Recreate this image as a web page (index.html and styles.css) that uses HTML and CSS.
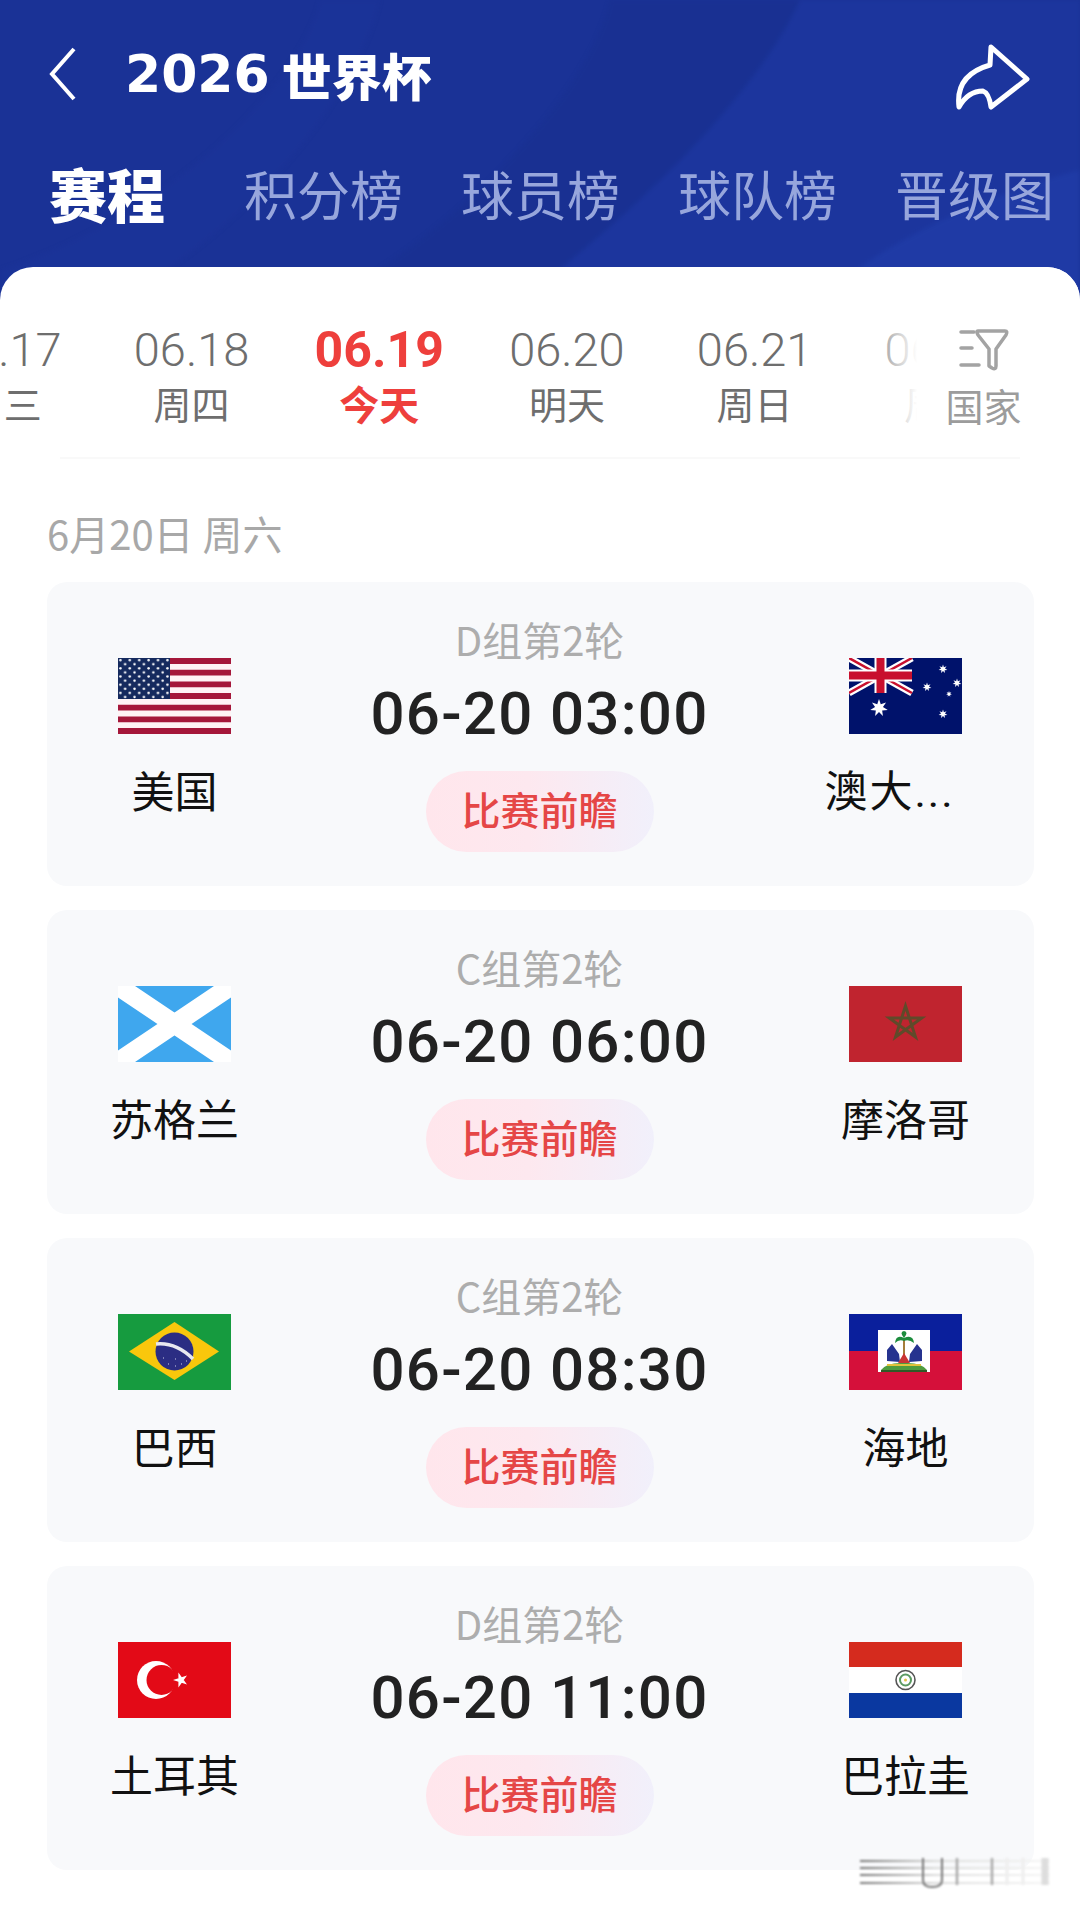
FILE: index.html
```html
<!DOCTYPE html>
<html lang="en">
<head>
    <meta charset="UTF-8">
    <meta name="viewport" content="width=device-width, initial-scale=1.0">
    <title>2026 世界杯</title>
    <link rel="stylesheet" href="styles.css">
</head>
<body>
    <!-- shared shapes for the flags -->
    <svg class="defs" width="0" height="0">
        <defs>
            <polygon id="star7" points="0,-1 .195,-.405 .782,-.623 .439,-.1 .975,.223 .352,.281 .434,.901 0,.45 -.434,.901 -.352,.281 -.975,.223 -.439,-.1 -.782,-.623 -.195,-.405" fill="#fff"/>
            <pattern id="usStars" width="9.4" height="8.2" patternUnits="userSpaceOnUse">
                <circle cx="2.4" cy="2.1" r="1.25" fill="#fff"/>
                <circle cx="7.1" cy="6.2" r="1.25" fill="#fff"/>
            </pattern>
        </defs>
    </svg>

    <header class="header">
        <svg class="header-bands" viewBox="0 0 1080 300" preserveAspectRatio="none">
            <path d="M800 0 C760 90 640 210 520 300 L1080 300 L1080 0 Z" fill="#1f3aa6" opacity=".45"/>
            <path d="M610 0 C590 90 470 220 330 300 L520 300 C640 210 760 90 800 0 Z" fill="#172d8c" opacity=".3"/>
            <path d="M1080 170 C1000 190 880 240 820 300 L1080 300 Z" fill="#2140ad" opacity=".5"/>
            <path d="M320 0 C300 80 180 210 0 270 L0 300 L120 300 C260 220 360 90 380 0 Z" fill="#1e389f" opacity=".2"/>
        </svg>
        <div class="topbar">
            <svg class="back" width="28" height="54" viewBox="0 0 28 54">
                <path d="M25 2 L3 27 L25 52" fill="none" stroke="#fff" stroke-width="4"/>
            </svg>
            <h1 class="title"><span class="title-num">2026</span><span class="title-name">世界杯</span></h1>
            <svg class="share" width="80" height="72" viewBox="955 39 80 72">
                <path d="M993 48 L1029 80 L993 108 Q991 94 985 92 Q970 92 961 108 Q957 76 992 66 Z" fill="none" stroke="#fff" stroke-width="5" stroke-linejoin="round"/>
            </svg>
        </div>
        <nav class="tabs">
            <span class="tab tab-active">赛程</span>
            <span class="tab">积分榜</span>
            <span class="tab">球员榜</span>
            <span class="tab">球队榜</span>
            <span class="tab">晋级图</span>
        </nav>
    </header>

    <main class="sheet">
        <div class="date-bar">
            <div class="dates">
                <div class="date-item"><span class="date-num">06.17</span><span class="date-day">周三</span></div>
                <div class="date-item"><span class="date-num">06.18</span><span class="date-day">周四</span></div>
                <div class="date-item date-today"><span class="date-num">06.19</span><span class="date-day">今天</span></div>
                <div class="date-item"><span class="date-num">06.20</span><span class="date-day">明天</span></div>
                <div class="date-item"><span class="date-num">06.21</span><span class="date-day">周日</span></div>
                <div class="date-item"><span class="date-num">06.22</span><span class="date-day">周一</span></div>
            </div>
            <div class="country-filter">
                <svg width="50" height="42" viewBox="0 0 50 42">
                    <path d="M2 3 H15 M2 19 H13 M2 36 H20" fill="none" stroke="#a3a3a3" stroke-width="3.5" stroke-linecap="round"/>
                    <path d="M19 2 H46 Q49 2 47 6 L37 20 V37 Q37 41 33 39 L30 37 V20 L19 6 Q17 2 19 2 Z" fill="none" stroke="#a3a3a3" stroke-width="3.5" stroke-linejoin="round"/>
                </svg>
                <span class="country-label">国家</span>
            </div>
        </div>

        <h2 class="day-title">6月20日 周六</h2>

        <section class="matches">
            <article class="match">
                <div class="team">
                    <svg class="flag" viewBox="0 0 113 76">
                        <rect width="113" height="76" fill="#fff3f5"/>
                        <path d="M0 3 H113 M0 14.7 H113 M0 26.4 H113 M0 38 H113 M0 49.7 H113 M0 61.4 H113 M0 73 H113" stroke="#a5173a" stroke-width="5.8"/>
                        <rect width="52" height="41" fill="#152a5e"/>
                        <rect width="52" height="41" fill="url(#usStars)"/>
                    </svg>
                    <span class="team-name">美国</span>
                </div>
                <div class="info">
                    <span class="group">D组第2轮</span>
                    <span class="time">06-20 03:00</span>
                    <span class="preview">比赛前瞻</span>
                </div>
                <div class="team">
                    <svg class="flag" viewBox="0 0 113 76">
                        <rect width="113" height="76" fill="#00126b"/>
                        <path d="M0 0 L63 35 M63 0 L0 35" stroke="#fff" stroke-width="7"/>
                        <path d="M0 0 L63 35 M63 0 L0 35" stroke="#c8102e" stroke-width="2.5"/>
                        <path d="M31.5 0 V35 M0 17.5 H63" stroke="#fff" stroke-width="12"/>
                        <path d="M31.5 0 V35 M0 17.5 H63" stroke="#c8102e" stroke-width="8"/>
                        <use href="#star7" transform="translate(30 50) scale(9)"/>
                        <use href="#star7" transform="translate(94 11) scale(4.5)"/>
                        <use href="#star7" transform="translate(78 29) scale(4.5)"/>
                        <use href="#star7" transform="translate(108 25) scale(4.5)"/>
                        <use href="#star7" transform="translate(100 36) scale(3)"/>
                        <use href="#star7" transform="translate(94 56) scale(4.5)"/>
                    </svg>
                    <span class="team-name team-name-cut">澳大...</span>
                </div>
            </article>

            <article class="match">
                <div class="team">
                    <svg class="flag" viewBox="0 0 113 76">
                        <rect width="113" height="76" fill="#3fa7ee"/>
                        <path d="M0 0 L113 76 M113 0 L0 76" stroke="#fff" stroke-width="19"/>
                    </svg>
                    <span class="team-name">苏格兰</span>
                </div>
                <div class="info">
                    <span class="group">C组第2轮</span>
                    <span class="time">06-20 06:00</span>
                    <span class="preview">比赛前瞻</span>
                </div>
                <div class="team">
                    <svg class="flag" viewBox="0 0 113 76">
                        <rect width="113" height="76" fill="#c0242f"/>
                        <polygon points="56.5,20 66.5,51 40.3,32 72.7,32 46.5,51" fill="none" stroke="#5f4a2a" stroke-width="3"/>
                    </svg>
                    <span class="team-name">摩洛哥</span>
                </div>
            </article>

            <article class="match">
                <div class="team">
                    <svg class="flag" viewBox="0 0 113 76">
                        <rect width="113" height="76" fill="#169b3f"/>
                        <polygon points="11,37.5 56.5,8 101,37.5 56.5,66" fill="#f9c70c"/>
                        <circle cx="56.5" cy="37.5" r="19" fill="#2b2d83"/>
                        <path d="M38 30 Q58 28 75 45" fill="none" stroke="#e8e8f0" stroke-width="3.5"/>
                        <path d="M45 44 h1 M50 50 h1 M57 45 h1 M63 50 h1 M68 47 h1 M57 52 h1" stroke="#cfd0ea" stroke-width="1.2"/>
                    </svg>
                    <span class="team-name">巴西</span>
                </div>
                <div class="info">
                    <span class="group">C组第2轮</span>
                    <span class="time">06-20 08:30</span>
                    <span class="preview">比赛前瞻</span>
                </div>
                <div class="team">
                    <svg class="flag" viewBox="0 0 113 76">
                        <rect width="113" height="37" fill="#0a1f9c"/>
                        <rect y="37" width="113" height="39" fill="#d5103a"/>
                        <rect x="29" y="16" width="52" height="42" fill="#fff"/>
                        <path d="M55 26 V46" stroke="#a57c3a" stroke-width="2"/>
                        <path d="M55 24 Q47 20 46 29 Q50 25 55 27 Q60 25 65 29 Q64 20 55 24 Z M55 24 Q50 18 55 17 Q60 18 55 24 Z" fill="#1d8c3c"/>
                        <path d="M38 47 L38 36 L43 30 L50 40 L51 48 Z M73 47 L73 36 L68 30 L61 40 L60 48 Z" fill="#26338f"/>
                        <path d="M49 49 L55 39 L61 49 Z" fill="#c93535"/>
                        <path d="M32 56 Q38 48 55 49 Q72 48 78 56 Z" fill="#4f9c3f"/>
                        <path d="M38 51 H72" stroke="#e2c23b" stroke-width="2"/>
                        <path d="M32 57 H78" stroke="#2d5a26" stroke-width="2"/>
                    </svg>
                    <span class="team-name">海地</span>
                </div>
            </article>

            <article class="match">
                <div class="team">
                    <svg class="flag" viewBox="0 0 113 76">
                        <rect width="113" height="76" fill="#e30a17"/>
                        <circle cx="38" cy="38" r="19" fill="#fff"/>
                        <circle cx="43.5" cy="38" r="15" fill="#e30a17"/>
                        <polygon points="55,38 69,33.5 60.4,45.5 60.4,30.5 69,42.5" fill="#fff"/>
                    </svg>
                    <span class="team-name">土耳其</span>
                </div>
                <div class="info">
                    <span class="group">D组第2轮</span>
                    <span class="time">06-20 11:00</span>
                    <span class="preview">比赛前瞻</span>
                </div>
                <div class="team">
                    <svg class="flag" viewBox="0 0 113 76">
                        <rect width="113" height="25" fill="#d52b1e"/>
                        <rect y="25" width="113" height="26" fill="#fff"/>
                        <rect y="51" width="113" height="25" fill="#0a38a0"/>
                        <circle cx="56.5" cy="38" r="9.5" fill="#fff" stroke="#555" stroke-width="1.6"/>
                        <circle cx="56.5" cy="38" r="5.5" fill="none" stroke="#5b9a62" stroke-width="2"/>
                        <circle cx="56.5" cy="38" r="1.5" fill="#e3c54a"/>
                    </svg>
                    <span class="team-name">巴拉圭</span>
                </div>
            </article>
        </section>
    </main>

    <!-- blurred watermark in the bottom corner -->
    <svg class="watermark" width="200" height="36" viewBox="860 1856 200 36">
        <defs>
            <linearGradient id="lineFade" gradientUnits="userSpaceOnUse" x1="860" y1="0" x2="1050" y2="0">
                <stop offset="0" stop-color="#777"/>
                <stop offset=".4" stop-color="#ddd"/>
                <stop offset="1" stop-color="#f6f6f6"/>
            </linearGradient>
        </defs>
        <path d="M860 1861 H1050 M860 1868 H1050 M860 1875 H1050 M860 1883 H1050" stroke="url(#lineFade)" stroke-width="2"/>
        <path d="M923 1858 V1880 Q923 1887 932 1887 Q942 1887 942 1880 V1858" fill="none" stroke="#777" stroke-width="2"/>
        <path d="M957 1858 V1885 M992 1858 V1885" stroke="#aaa" stroke-width="2.5"/>
        <path d="M1007 1858 V1885 M1023 1858 V1885" stroke="#eee" stroke-width="3"/>
        <path d="M1045 1858 V1885" stroke="#ddd" stroke-width="7"/>
    </svg>
</body>
</html>
```

FILE: styles.css
```css
* {
    box-sizing: border-box;
}
html, body {
    margin: 0;
    padding: 0;
}
body {
    position: relative;
    width: 1080px;
    height: 1910px;
    overflow: hidden;
    background-color: #fff;
    font-family: "Noto Sans CJK SC", "Noto Sans", sans-serif;
}
.defs {
    position: absolute;
}

/* blue header */
.header {
    position: relative;
    height: 300px;
    padding-top: 42px;
    background-color: #1a3296;
    overflow: hidden;
}
.header-bands {
    position: absolute;
    left: 0;
    top: 0;
    width: 1080px;
    height: 300px;
    filter: blur(2px);
}
.topbar {
    position: relative;
    display: flex;
    align-items: center;
    height: 64px;
    padding: 0 50px 0 49px;
}
.back {
    flex: none;
    margin-right: 48px;
}
.title {
    flex: 1;
    display: flex;
    align-items: center;
    gap: 12px;
    margin: 0;
    color: #fff;
    font-size: 50px;
    line-height: 64px;
    font-weight: 900;
    white-space: nowrap;
}
.title-num {
    font-family: "DejaVu Sans", sans-serif;
    font-size: 52px;
    font-weight: 700;
}
.share {
    flex: none;
    margin-right: -3px;
}
.tabs {
    position: relative;
    display: flex;
    align-items: center;
    gap: 58px;
    height: 70px;
    margin-top: 52px;
    padding-left: 49px;
}
.tab {
    color: #97a6dc;
    font-size: 53px;
    line-height: 70px;
    white-space: nowrap;
}
.tab-active {
    margin-right: 21px;
    color: #fff;
    font-size: 58px;
    font-weight: 900;
}

/* white sheet */
.sheet {
    position: relative;
    margin-top: -33px;
    height: 1643px;
    background-color: #fff;
    border-radius: 33px 33px 0 0;
    overflow: hidden;
}
.date-bar {
    position: relative;
    height: 190px;
}
.date-bar::after {
    content: "";
    position: absolute;
    left: 60px;
    right: 60px;
    top: 190px;
    height: 2px;
    background-color: #f9f9f9;
}
.dates {
    display: flex;
    margin-left: -90px;
    padding-top: 58px;
}
.date-item {
    flex: none;
    display: flex;
    flex-direction: column;
    align-items: center;
    width: 187.7px;
    color: #6e6e6e;
}
.date-num {
    font-family: "Roboto", sans-serif;
    font-size: 47px;
    font-weight: 300;
    line-height: 50px;
}
.date-day {
    margin-top: 2px;
    font-size: 38px;
    line-height: 52px;
}
.date-today {
    color: #ee3f3c;
}
.date-today .date-num {
    font-size: 50px;
    font-weight: 700;
}
.date-today .date-day {
    font-size: 40px;
    font-weight: 700;
}
.country-filter {
    position: absolute;
    right: 0;
    top: 0;
    display: flex;
    flex-direction: column;
    align-items: center;
    width: 220px;
    height: 188px;
    padding: 62px 0 0 27px;
    background: linear-gradient(to right, rgba(255, 255, 255, 0), #fff 26%);
}
.country-label {
    margin-top: 7px;
    color: #9c9c9c;
    font-size: 38px;
    line-height: 54px;
}
.day-title {
    margin: 51px 0 0 47px;
    color: #a8a8a8;
    font-size: 40px;
    font-weight: 400;
    line-height: 50px;
    white-space: nowrap;
}

/* match cards */
.matches {
    display: flex;
    flex-direction: column;
    gap: 24px;
    margin: 24px 46px 0 47px;
}
.match {
    display: grid;
    grid-template-columns: 253px 479px 1fr;
    height: 304px;
    background-color: #f8f9fb;
    border-radius: 20px;
}
.team {
    display: flex;
    flex-direction: column;
    align-items: center;
    padding: 76px 0 0 2px;
}
.team:last-child {
    padding: 76px 2px 0 0;
}
.flag {
    display: block;
    width: 113px;
    height: 76px;
}
.team-name {
    margin-top: 27px;
    color: #111;
    font-size: 43px;
    line-height: 56px;
    white-space: nowrap;
}
.team-name-cut {
    margin-top: 30px;
    margin-right: 32px;
    font-family: "Roboto", "Noto Sans CJK SC", sans-serif;
    letter-spacing: 2px;
}
.info {
    display: flex;
    flex-direction: column;
    align-items: center;
    padding-top: 32px;
}
.group {
    color: #adadad;
    font-size: 40px;
    line-height: 50px;
}
.time {
    margin-top: 15px;
    color: #222;
    font-family: "Roboto", sans-serif;
    font-size: 60px;
    font-weight: 500;
    letter-spacing: 1.3px;
    line-height: 70px;
    white-space: nowrap;
}
.preview {
    display: flex;
    align-items: center;
    justify-content: center;
    width: 228px;
    height: 81px;
    margin-top: 22px;
    padding-bottom: 8px;
    border-radius: 41px;
    background: linear-gradient(to right, #ffe6ec, #fde8ef 45%, #f1f0fb);
    color: #e54646;
    font-size: 39px;
    font-weight: 500;
}

.watermark {
    position: absolute;
    left: 860px;
    top: 1856px;
    filter: blur(1px);
}
```
